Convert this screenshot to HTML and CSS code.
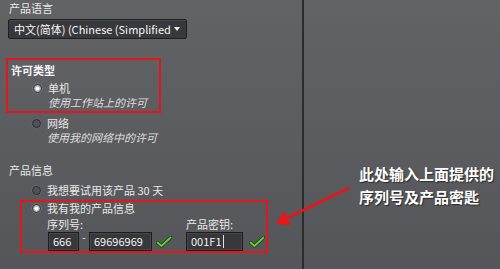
FILE: index.html
```html
<!DOCTYPE html>
<html lang="zh-CN">
<head>
<meta charset="utf-8">
<link rel="stylesheet" href="styles.css">
</head>
<body>
<div class="page">
  <div class="left">
    <div class="label">产品语言</div>
    <div class="select"><span class="select-text">中文(简体) (Chinese (Simplified</span><span class="caret"></span></div>

    <div class="box box1">
      <div class="label bold">许可类型</div>
      <div class="opt"><span class="radio on"></span><span>单机</span></div>
      <div class="desc">使用工作站上的许可</div>
    </div>
    <div class="opt opt-net"><span class="radio"></span><span>网络</span></div>
    <div class="desc">使用我的网络中的许可</div>

    <div class="label section">产品信息</div>
    <div class="opt opt-trial"><span class="radio"></span><span>我想要试用该产品 30 天</span></div>

    <div class="box box2">
      <div class="opt opt-own"><span class="radio on"></span><span>我有我的产品信息</span></div>
      <div class="fields">
        <div class="col col-serial">
          <div class="flabel">序列号:</div>
          <div class="inrow">
            <div class="input in-a">666</div>
            <span class="dash">-</span>
            <div class="input in-b">69696969</div>
            <svg class="check" viewBox="0 0 16 12" width="16" height="12"><polyline points="1.5,6.5 5.5,10 14.5,1.5" fill="none" stroke="#1f3d12" stroke-width="3.4" stroke-linecap="round" stroke-linejoin="round"/><polyline points="1.5,6.5 5.5,10 14.5,1.5" fill="none" stroke="#5fd13a" stroke-width="1.8" stroke-linecap="round" stroke-linejoin="round"/></svg>
          </div>
        </div>
        <div class="col col-key">
          <div class="flabel">产品密钥:</div>
          <div class="inrow">
            <div class="input in-c">001F1<span class="cursor"></span></div>
            <svg class="check" viewBox="0 0 16 12" width="16" height="12"><polyline points="1.5,6.5 5.5,10 14.5,1.5" fill="none" stroke="#1f3d12" stroke-width="3.4" stroke-linecap="round" stroke-linejoin="round"/><polyline points="1.5,6.5 5.5,10 14.5,1.5" fill="none" stroke="#5fd13a" stroke-width="1.8" stroke-linecap="round" stroke-linejoin="round"/></svg>
          </div>
        </div>
      </div>
    </div>
  </div>
  <div class="right"></div>

  <div class="note">此处输入上面提供的<br>序列号及产品密匙</div>
  <svg class="arrow" width="500" height="269" viewBox="0 0 500 269">
    <line x1="349" y1="188" x2="287" y2="218" stroke="#e8151b" stroke-width="3"/>
    <polygon points="276,224 284,211 291,225" fill="#e8151b"/>
  </svg>
</div>
</body>
</html>
```

FILE: styles.css
```css
html, body {
  margin: 0;
  padding: 0;
}
body {
  width: 500px;
  height: 269px;
  overflow: hidden;
  background: linear-gradient(#626365, #55565a);
  font-family: "Noto Sans CJK SC", "Noto Sans", sans-serif;
  font-size: 11px;
  color: #e8e8e8;
}
.page {
  position: relative;
  display: flex;
  height: 269px;
}
.left {
  width: 304px;
  box-sizing: border-box;
  border-right: 2px solid #2b2c2e;
  padding-left: 8px;
}
.right {
  flex: 1;
}
.label {
  height: 14px;
  line-height: 14px;
  margin-top: 1px;
  padding-left: 1px;
}
.bold {
  font-weight: 700;
  color: #f4f4f4;
}
.select {
  margin-top: 4px;
  width: 179px;
  height: 20px;
  box-sizing: border-box;
  background: #38393c;
  border: 1px solid #1f2022;
  border-radius: 2px;
  box-shadow: inset 0 1px 0 #47484b;
  display: flex;
  align-items: center;
  justify-content: space-between;
  padding: 0 6px 0 5px;
  color: #f6f6f6;
  font-size: 11px;
}
.select-text {
  white-space: nowrap;
  overflow: hidden;
}
.caret {
  width: 0;
  height: 0;
  border-left: 3.5px solid transparent;
  border-right: 3.5px solid transparent;
  border-top: 4px solid #f0f0f0;
  flex: none;
}
.box {
  border: 2px solid #e8141a;
  box-sizing: border-box;
}
.box1 {
  margin-top: 19px;
  margin-left: -2px;
  width: 155px;
  height: 55px;
  padding-top: 1px;
  padding-left: 2px;
}
.box1 .label {
  margin-top: 2px;
}
.opt {
  display: flex;
  align-items: center;
  height: 14px;
  line-height: 14px;
  padding-left: 24px;
  white-space: nowrap;
}
.box1 .opt {
  margin-top: 4px;
  padding-left: 23px;
}
.radio {
  width: 9px;
  height: 9px;
  box-sizing: border-box;
  border-radius: 50%;
  border: 1.5px solid #2a2b2d;
  background: #505154;
  box-shadow: 0 0 0 0.5px #6d6e71;
  margin-right: 6px;
  flex: none;
}
.radio.on {
  border: 1.5px solid #3a3b3d;
  background: radial-gradient(circle, #ffffff 0 1.6px, #bdbdbd 2.2px, #9a9a9a 100%);
  box-shadow: 0 0 0 0.5px #8a8a8a;
}
.desc {
  height: 14px;
  line-height: 14px;
  padding-left: 39px;
  font-style: italic;
  color: #dcdcdc;
  white-space: nowrap;
}
.box1 .desc {
  padding-left: 38px;
}
.opt-net {
  margin-top: 3px;
}
.section {
  margin-top: 19px;
}
.opt-trial {
  margin-top: 6px;
}
.box2 {
  margin-top: 3px;
  margin-left: 12px;
  width: 248px;
  height: 53px;
}
.box2 .opt {
  height: 12px;
  line-height: 12px;
  padding-left: 10px;
}
.fields {
  display: flex;
  padding-left: 25px;
  margin-top: 3px;
}
.col-serial {
  width: 139px;
}
.flabel {
  height: 14px;
  line-height: 14px;
}
.inrow {
  margin-top: 1px;
  display: flex;
  align-items: center;
}
.input {
  height: 19px;
  box-sizing: border-box;
  background: #37383b;
  border: 1px solid #1c1d1f;
  box-shadow: inset 0 0 0 1px #46474a;
  color: #f2f2f2;
  font-size: 11px;
  line-height: 17px;
  padding-left: 4px;
  display: flex;
  align-items: center;
}
.in-a {
  width: 31px;
  margin-left: 1px;
}
.dash {
  width: 10px;
  text-align: center;
  line-height: 10px;
  align-self: flex-start;
  color: #dddddd;
}
.in-b {
  width: 63px;
}
.in-c {
  width: 57px;
}
.cursor {
  display: inline-block;
  width: 1px;
  height: 13px;
  background: #e0e0e0;
  margin-left: 1px;
}
.check {
  margin-left: 4px;
  flex: none;
}
.in-c + .check {
  margin-left: 6px;
}
.note {
  position: absolute;
  left: 359px;
  top: 162px;
  font-size: 15px;
  line-height: 23px;
  font-weight: 700;
  color: #ffffff;
  text-shadow: 1px 1px 1px #2a2a2a;
  white-space: nowrap;
}
.arrow {
  position: absolute;
  left: 0;
  top: 0;
}
```
